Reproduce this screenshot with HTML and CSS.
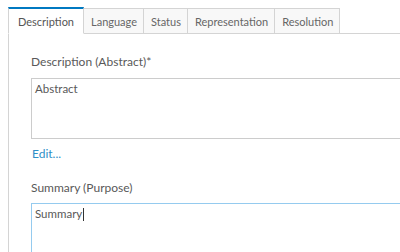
FILE: index.html
```
<!DOCTYPE html>
<html lang="en">
<head>
<meta charset="UTF-8">
<title>Metadata – Description</title>
<link rel="stylesheet" href="styles.css">
</head>
<body>

<!-- tabs -->
<div class="tabs">
  <button class="tab active">Description</button>
  <button class="tab">Language</button>
  <button class="tab">Status</button>
  <button class="tab">Representation</button>
  <button class="tab">Resolution</button>
  <span class="tab-rest"></span>
</div>

<!-- panel -->
<div class="panel">
  <label class="field-label">Description (Abstract)*</label>
  <textarea class="field abstract">Abstract</textarea>
  <a class="edit-link" href="#">Edit...</a>

  <label class="field-label">Summary (Purpose)</label>
  <div class="field summary focus">Summary<span class="caret"></span></div>
</div>

</body>
</html>
```

FILE: styles.css
```
:root{
  --fg:#595959;--line:#d4d4d4;--tabbg:#f8f8f8;--accent:#0079c1;
  --link:#2f8fc7;--focus:#95cbef;
}
*{box-sizing:border-box;margin:0;padding:0}
html,body{height:100%;overflow:hidden}
body{font:12px/1.4 "Lato","Open Sans",sans-serif;color:var(--fg);
     background:#fff;padding:7px 0 0 8px;display:flex;flex-direction:column}

.tabs{display:flex;align-items:flex-end;height:27px;flex:none}
.tab{font:11px "Lato","Open Sans",sans-serif;color:#666;background:var(--tabbg);
     border:1px solid var(--line);border-left:none;height:26px;padding:0 6px 0 7px;
     display:flex;align-items:center}
.tab:first-child{border-left:1px solid var(--line)}
.tab.active{background:#fff;border-top:2px solid var(--accent);height:27px;
            border-bottom-color:#fff;padding:0 9px;color:#555}
.tab-rest{flex:1;border-bottom:1px solid var(--line)}

.panel{flex:1;border-left:1px solid var(--line);padding:20px 0 0 22px;
       display:flex;flex-direction:column;align-items:flex-start;overflow:hidden}
.field-label{font-size:12px;color:var(--fg);margin-bottom:7px}
.field{flex:none;width:371px;height:61px;border:1px solid #ccc;resize:none;outline:none;
       font:11.5px/1.3 "Lato","Open Sans",sans-serif;color:var(--fg);padding:3px 3px}
.field.focus{border-color:var(--focus);height:80px}
.caret{display:inline-block;width:1px;height:13px;background:#333;vertical-align:-3px;margin-left:1px}
.edit-link{color:var(--link);text-decoration:none;font-size:12px;margin:7px 0 17px 1px}
```
